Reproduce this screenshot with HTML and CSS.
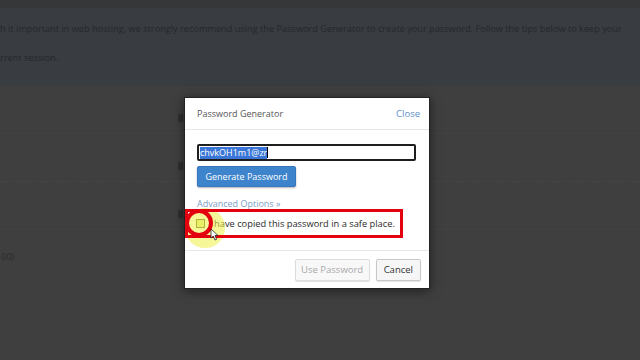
FILE: index.html
```html
<!DOCTYPE html>
<html>
<head>
  <link rel="stylesheet" href="styles.css">
</head>
<body>
  <div class="page">
    <div class="topbar"></div>
    <div class="alert">
      <p>h it important in web hosting, we strongly recommend using the Password Generator to create your password. Follow the tips below to keep your</p>
      <p>rrent session.</p>
    </div>
    <div class="rows">
      <div class="row"><span class="mark"></span></div>
      <div class="row line"><span class="mark"></span></div>
      <div class="row"><span class="mark"></span></div>
      <div class="row note">00)</div>
    </div>
  </div>

  <div class="modal">
    <div class="modal-header">
      <span class="modal-title">Password Generator</span>
      <a class="close">Close</a>
    </div>
    <div class="modal-body">
      <div class="pw-input"><span class="selected">chvkOH1m1@zr</span><span class="caret"></span></div>
      <button class="primary">Generate Password</button>
      <div class="advanced">Advanced Options »</div>
      <label class="copied">
        <span class="checkbox"></span>
        I have copied this password in a safe place.
      </label>
    </div>
    <div class="modal-footer">
      <button class="btn disabled">Use Password</button>
      <button class="btn">Cancel</button>
    </div>
  </div>

  <div class="hl-yellow"></div>
  <div class="hl-box"></div>
  <div class="hl-circle"></div>
  <svg class="pointer" width="9" height="13" viewBox="0 0 9 13">
    <path d="M1 1 L1 10 L3.3 8 L5 12 L6.6 11.3 L5 7.5 L8 7.5 Z" fill="#fff" stroke="#222" stroke-width="0.8"/>
  </svg>
</body>
</html>
```

FILE: styles.css
```css
body {
  margin: 0;
  width: 640px;
  height: 360px;
  overflow: hidden;
  background: #3f3f3f;
  font-family: 'Open Sans', sans-serif;
  position: relative;
}

.page {
  display: flex;
  flex-direction: column;
}

.topbar {
  height: 8px;
  background: #353739;
}

.alert {
  height: 78px;
  background: #393c41;
  padding: 14px 0 0 0;
  box-sizing: border-box;
}

.alert p {
  margin: 0;
  height: 29px;
  font-size: 9.2px;
  color: #25282c;
  white-space: nowrap;
}

.rows {
  display: flex;
  flex-direction: column;
}

.row {
  height: 47px;
  position: relative;
  border-bottom: 1px solid #424242;
}

.row.line {
  border-bottom: 1px dashed #464646;
}

.mark {
  position: absolute;
  left: 178px;
  top: 28px;
  width: 5px;
  height: 8px;
  background: #2e2e2e;
}

.note {
  border: none;
  font-size: 9px;
  color: #2c2c2c;
  padding-top: 20px;
  box-sizing: border-box;
  padding-left: 1px;
}

.modal {
  position: absolute;
  left: 184px;
  top: 97px;
  width: 246px;
  height: 192px;
  background: #fff;
  border: 1px solid #222;
  box-sizing: border-box;
  box-shadow: 0 2px 10px rgba(0, 0, 0, 0.5);
  display: flex;
  flex-direction: column;
}

.modal-header {
  height: 31px;
  display: flex;
  justify-content: space-between;
  align-items: center;
  padding: 0 9px 0 12px;
  border-bottom: 1px solid #e8e8e8;
}

.modal-title {
  font-size: 9px;
  color: #555;
}

.close {
  font-size: 9.5px;
  color: #5b8fc9;
}

.modal-body {
  padding: 14px 12px 0;
  flex-grow: 1;
}

.pw-input {
  width: 219px;
  height: 17px;
  border: 2px solid #1e1e1e;
  border-radius: 2px;
  box-sizing: border-box;
  display: flex;
  align-items: center;
  padding-left: 1px;
  font-size: 9px;
}

.selected {
  background: #3a76d8;
  color: #fff;
  line-height: 12px;
}

.caret {
  width: 1px;
  height: 11px;
  background: #000;
}

button {
  font-family: 'Open Sans', sans-serif;
  cursor: pointer;
  white-space: nowrap;
}

.primary {
  display: block;
  margin-top: 5px;
  width: 99px;
  height: 21px;
  padding: 0;
  background: #3d84cc;
  color: #fff;
  border: 1px solid #3677bb;
  border-radius: 2px;
  font-size: 9px;
  box-shadow: 0 1px 2px rgba(0, 0, 0, 0.3);
}

.advanced {
  margin-top: 11px;
  font-size: 9px;
  color: #7b9dc4;
  line-height: 12px;
}

.copied {
  display: flex;
  align-items: center;
  gap: 4px;
  margin-top: 7px;
  margin-left: -1px;
  font-size: 9.3px;
  color: #2a2a2a;
}

.checkbox {
  width: 7px;
  height: 7px;
  border: 1px solid #6b6b2e;
  background: #e8ea90;
}

.modal-footer {
  height: 37px;
  border-top: 1px solid #e8e8e8;
  display: flex;
  justify-content: flex-end;
  align-items: center;
  gap: 6px;
  padding: 0 8px;
}

.btn {
  height: 22px;
  padding: 0 7px;
  font-size: 9.5px;
  background: #f6f6f6;
  border: 1px solid #c8c8c8;
  border-radius: 2px;
  color: #333;
  box-shadow: 0 1px 1px rgba(0, 0, 0, 0.12);
}

.btn.disabled {
  width: 75px;
  padding: 0;
  color: #a8a8a8;
  border-color: #ddd;
  background: #f8f8f8;
}

.hl-yellow {
  position: absolute;
  left: 185px;
  top: 208px;
  width: 40px;
  height: 40px;
  border-radius: 50%;
  background: rgba(236, 240, 70, 0.55);
}

.hl-box {
  position: absolute;
  left: 185px;
  top: 209px;
  width: 218px;
  height: 29px;
  border: 3px solid #e3000f;
  box-sizing: border-box;
}

.hl-circle {
  position: absolute;
  left: 185px;
  top: 209px;
  width: 28px;
  height: 28px;
  border: 4px solid #e3000f;
  border-radius: 50%;
  box-sizing: border-box;
}

.pointer {
  position: absolute;
  left: 210px;
  top: 228px;
}
```
